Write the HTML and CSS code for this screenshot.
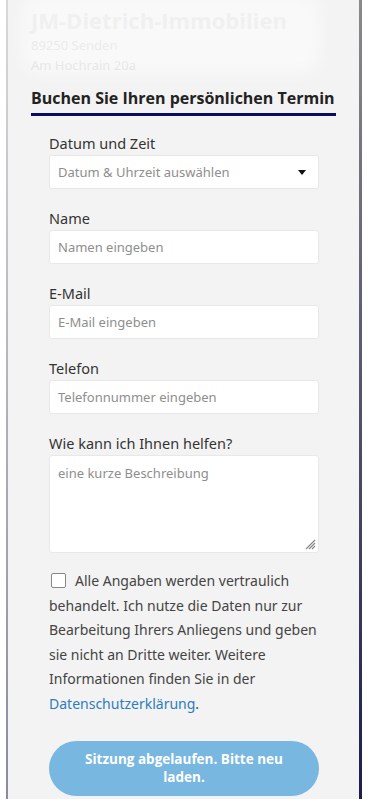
FILE: index.html
```
<!DOCTYPE html>
<html lang="de">
<head>
<meta charset="utf-8">
<link rel="stylesheet" href="styles.css">
</head>
<body>
<div class="panel">
  <header class="company">
    <div class="company-name">JM-Dietrich-Immobilien</div>
    <div class="company-line">89250 Senden</div>
    <div class="company-line">Am Hochrain 20a</div>
  </header>
  <h2 class="title">Buchen Sie Ihren persönlichen Termin</h2>
  <form class="form">
    <div class="group">
      <label class="label">Datum und Zeit</label>
      <div class="field select">
        <span class="ph">Datum &amp; Uhrzeit auswählen</span>
        <span class="caret"></span>
      </div>
    </div>
    <div class="group">
      <label class="label">Name</label>
      <div class="field"><span class="ph">Namen eingeben</span></div>
    </div>
    <div class="group">
      <label class="label">E-Mail</label>
      <div class="field"><span class="ph">E-Mail eingeben</span></div>
    </div>
    <div class="group">
      <label class="label">Telefon</label>
      <div class="field"><span class="ph">Telefonnummer eingeben</span></div>
    </div>
    <div class="group group-area">
      <label class="label">Wie kann ich Ihnen helfen?</label>
      <div class="field area">
        <span class="ph">eine kurze Beschreibung</span>
        <svg class="grip" width="12" height="12" viewBox="0 0 12 12"><path d="M11 2 L2 11 M11 5 L5 11 M11 8 L8 11" stroke="#888" stroke-width="1.2" fill="none"/></svg>
      </div>
    </div>
    <p class="consent"><span class="box"></span>Alle Angaben werden vertraulich behandelt. Ich nutze die Daten nur zur Bearbeitung Ihrers Anliegens und geben sie nicht an Dritte weiter. Weitere Informationen finden Sie in der <a class="link">Datenschutzerklärung</a>.</p>
    <div class="btn">Sitzung abgelaufen. Bitte neu laden.</div>
  </form>
</div>
</body>
</html>
```
FILE: styles.css
```
html, body { margin: 0; padding: 0; background: #fff; }
body { font-family: "Noto Sans", "Open Sans", sans-serif; color: #444; }

.panel {
  margin-left: 6px;
  width: 356px;
  height: 799px;
  box-sizing: border-box;
  padding: 0 0 0 25px;
  background:
    linear-gradient(#d8d8d8, #8a8aa0) left top / 2px 100% no-repeat,
    linear-gradient(#8a8a8a, #1c1c50) right top / 3px 100% no-repeat,
    #f3f3f3;
  position: relative;
  overflow: hidden;
}

.company { position: relative; padding-top: 6px; height: 73px; color: #e0e0e0; }
.company::after {
  content: "";
  position: absolute;
  left: -10px; top: -6px; width: 300px; height: 80px;
  background: rgba(255,255,255,0.5);
  filter: blur(8px);
  border-radius: 20px;
}
.company-name { font-family: "Open Sans", sans-serif; font-weight: 700; font-size: 22px; line-height: 29px; }
.company-line { font-size: 13px; line-height: 20px; color: #d6d6d6; }

.title {
  margin: 8px 0 0 0;
  width: 305px;
  font-family: "Open Sans", sans-serif;
  font-weight: 700;
  font-size: 16px;
  line-height: 22px;
  color: #222;
  padding-bottom: 4px;
  border-bottom: 3px solid #0c0c5e;
  white-space: nowrap;
}

.form { padding: 17px 0 0 18px; width: 270px; }
.group { margin-bottom: 19px; }
.label { display: block; font-size: 14.5px; line-height: 20px; color: #333; margin-bottom: 2px; }
.field {
  box-sizing: border-box;
  height: 34px;
  background: #fff;
  border: 1px solid #e8e8e8;
  border-radius: 3px;
  display: flex; align-items: center;
  padding: 0 8px;
  position: relative;
}
.ph { font-size: 13px; color: #8e8e8e; }
.select { justify-content: space-between; padding-right: 12px; }
.caret { width: 0; height: 0; border-left: 4px solid transparent; border-right: 4px solid transparent; border-top: 5px solid #111; }
.area { height: 98px; align-items: flex-start; padding-top: 8px; }
.grip { position: absolute; right: 2px; bottom: 2px; }
.group-area { margin-bottom: 16px; }

.consent { margin: 0; font-size: 14px; line-height: 24.6px; color: #444; }
.box { display: inline-block; width: 13px; height: 13px; border: 1px solid #888; background: #fff; border-radius: 2px; vertical-align: -2px; margin: 0 9px 0 2px; }
.link { color: #2c7dbd; }

.btn {
  margin-top: 24px;
  height: 55px;
  border-radius: 28px;
  background: #78b7e0;
  color: #fff;
  font-family: "Open Sans", sans-serif;
  font-weight: 700;
  font-size: 13.5px;
  line-height: 18px;
  display: flex; align-items: center; justify-content: center;
  text-align: center;
  padding: 0 25px;
}
```
